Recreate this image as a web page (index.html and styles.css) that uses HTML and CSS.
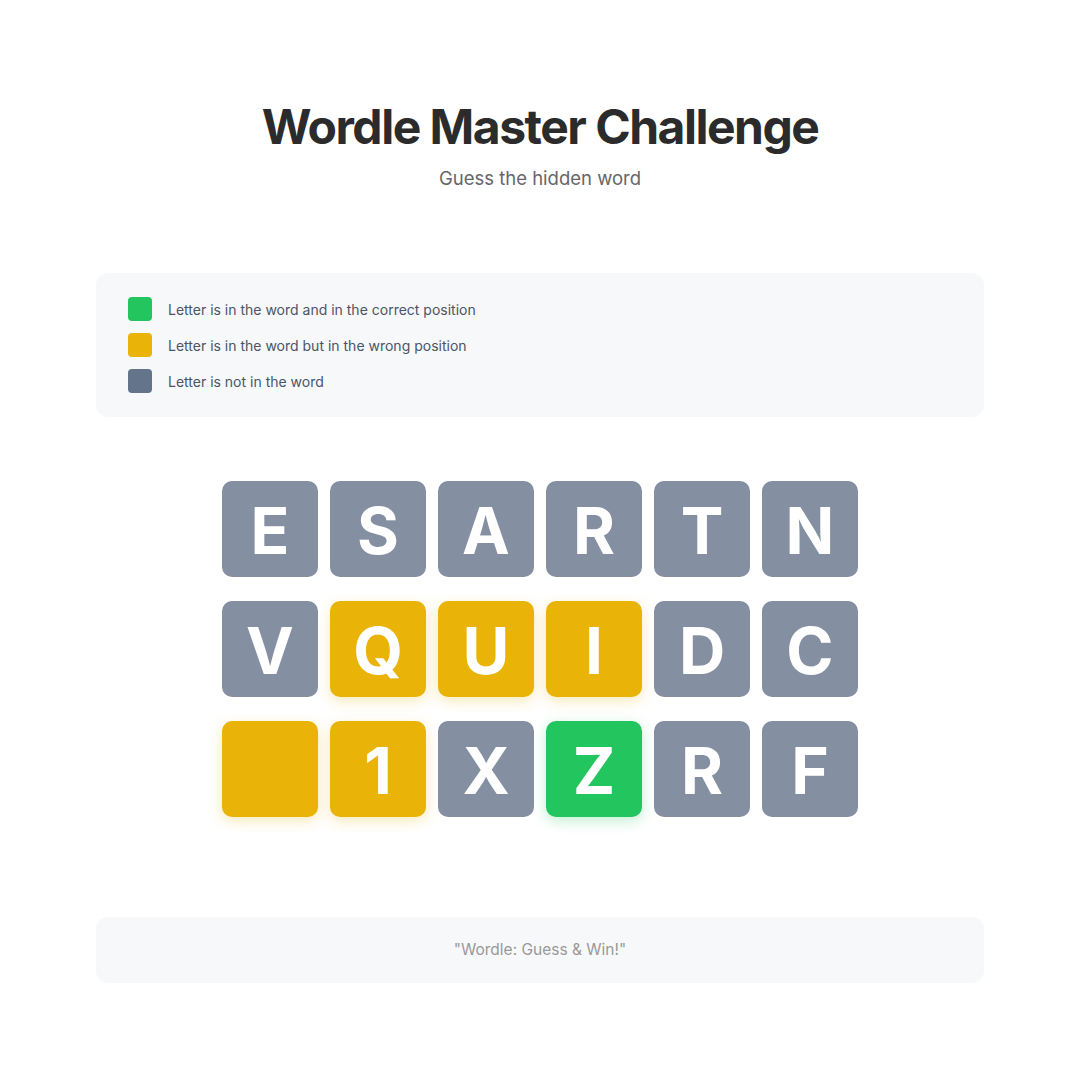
FILE: index.html
```html
<!DOCTYPE html>
<html lang="en">
<head>
<meta charset="utf-8">
<title>Wordle Master Challenge</title>
<link rel="stylesheet" href="styles.css">
</head>
<body>
<main class="page">
  <header class="header">
    <h1 class="title">Wordle Master Challenge</h1>
    <p class="subtitle">Guess the hidden word</p>
  </header>

  <section class="legend">
    <div class="legend-row"><span class="swatch swatch-correct"></span><span class="legend-text">Letter is in the word and in the correct position</span></div>
    <div class="legend-row"><span class="swatch swatch-present"></span><span class="legend-text">Letter is in the word but in the wrong position</span></div>
    <div class="legend-row"><span class="swatch swatch-absent"></span><span class="legend-text">Letter is not in the word</span></div>
  </section>

  <section class="board">
    <div class="tile absent">E</div>
    <div class="tile absent">S</div>
    <div class="tile absent">A</div>
    <div class="tile absent">R</div>
    <div class="tile absent">T</div>
    <div class="tile absent">N</div>

    <div class="tile absent">V</div>
    <div class="tile present">Q</div>
    <div class="tile present">U</div>
    <div class="tile present">I</div>
    <div class="tile absent">D</div>
    <div class="tile absent">C</div>

    <div class="tile present"></div>
    <div class="tile present">1</div>
    <div class="tile absent">X</div>
    <div class="tile correct">Z</div>
    <div class="tile absent">R</div>
    <div class="tile absent">F</div>
  </section>

  <footer class="footer">"Wordle: Guess &amp; Win!"</footer>
</main>
</body>
</html>
```

FILE: styles.css
```css
* { box-sizing: border-box; }

html, body {
  margin: 0;
  padding: 0;
  background: #ffffff;
  font-family: Inter, "Noto Sans", "Liberation Sans", sans-serif;
}

.page {
  width: 888px;
  margin: 0 auto;
  padding-top: 98px;
}

.header {
  display: flex;
  flex-direction: column;
  align-items: center;
  gap: 8px;
}

.title {
  margin: 0;
  font-size: 48px;
  line-height: 58px;
  font-weight: 700;
  color: #2b2b2b;
  letter-spacing: -1.5px;
}

.subtitle {
  margin: 0;
  font-size: 18.5px;
  line-height: 28px;
  color: #666666;
}

.legend {
  margin-top: 81px;
  background: #f7f8fa;
  border-radius: 12px;
  padding: 24px 32px;
  display: flex;
  flex-direction: column;
  gap: 12px;
}

.legend-row {
  display: flex;
  align-items: center;
  gap: 16px;
  height: 24px;
}

.swatch {
  width: 24px;
  height: 24px;
  border-radius: 4px;
  flex: none;
}

.swatch-correct { background: #22c55e; }
.swatch-present { background: #eab308; }
.swatch-absent { background: #64748b; }

.legend-text {
  font-size: 14px;
  color: #4a5568;
}

.board {
  margin: 64px auto 0;
  width: 636px;
  display: grid;
  grid-template-columns: repeat(6, 96px);
  grid-auto-rows: 96px;
  column-gap: 12px;
  row-gap: 24px;
}

.tile {
  border-radius: 10px;
  display: flex;
  align-items: center;
  justify-content: center;
  padding-top: 3px;
  color: #ffffff;
  font-family: Inter, "Liberation Sans", sans-serif;
  font-weight: 700;
  font-size: 64px;
}

.tile.absent { background: #8490a2; }
.tile.present {
  background: #e9b308;
  box-shadow: 0 4px 14px rgba(234, 179, 8, 0.28);
}
.tile.correct {
  background: #22c55e;
  box-shadow: 0 4px 14px rgba(34, 197, 94, 0.28);
}

.footer {
  margin-top: 100px;
  background: #f7f8fa;
  border-radius: 12px;
  padding: 24px;
  text-align: center;
  font-size: 15.5px;
  line-height: 18px;
  color: #999999;
}
```
